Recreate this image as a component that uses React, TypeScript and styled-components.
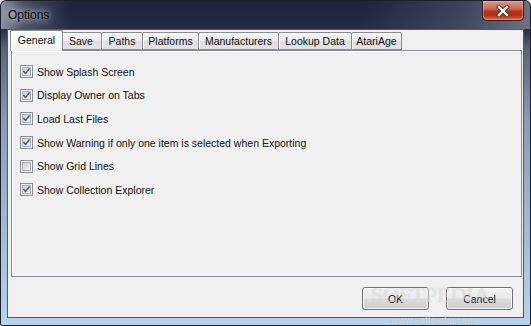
import React from 'react';
import styled, { createGlobalStyle } from 'styled-components';

const GlobalStyle = createGlobalStyle`
  html, body {
    margin: 0;
    padding: 0;
    background: #ffffff;
  }
  * {
    box-sizing: border-box;
  }
`;

const OPTIONS = [
  { label: 'Show Splash Screen', checked: true },
  { label: 'Display Owner on Tabs', checked: true },
  { label: 'Load Last Files', checked: true },
  { label: 'Show Warning if only one item is selected when Exporting', checked: true },
  { label: 'Show Grid Lines', checked: false },
  { label: 'Show Collection Explorer', checked: true },
];

const TABS = [
  { label: 'General', width: 53 },
  { label: 'Save', width: 42 },
  { label: 'Paths', width: 42 },
  { label: 'Platforms', width: 57 },
  { label: 'Manufacturers', width: 81 },
  { label: 'Lookup Data', width: 74 },
  { label: 'AtariAge', width: 51 },
];

const Window = styled.div`
  position: relative;
  width: 531px;
  height: 326px;
  display: flex;
  flex-direction: column;
  padding-bottom: 7px;
  border: 1px solid #1b1f2c;
  border-radius: 6px 6px 2px 2px;
  overflow: hidden;
  background: linear-gradient(
    to bottom,
    #1d2239 0px,
    #252b44 28px,
    #5b6379 48px,
    #8a9bb6 120px,
    #a6c0df 250px,
    #b9d4ef 326px
  );
  font-family: 'Liberation Sans', Arial, sans-serif;
`;

const TitleBar = styled.div`
  height: 28px;
  flex: none;
  display: flex;
  align-items: flex-start;
  justify-content: space-between;
  padding: 0 6px 0 7px;
  background: linear-gradient(
    90deg,
    rgba(150, 158, 178, 0.9) 0px,
    rgba(110, 118, 140, 0.55) 22px,
    rgba(30, 35, 58, 0) 70px,
    rgba(30, 35, 58, 0) 360px,
    rgba(90, 98, 118, 0.5) 460px,
    rgba(130, 138, 155, 0.75) 100%
  );
`;

const Title = styled.span`
  margin-top: 7px;
  font-size: 12px;
  line-height: 15px;
  color: #000;
  text-shadow: 0 0 6px rgba(255, 255, 255, 0.9), 0 0 12px rgba(255, 255, 255, 0.6);
`;

const CloseButton = styled.div`
  width: 42px;
  height: 20px;
  display: flex;
  align-items: center;
  justify-content: center;
  border: 1px solid #3b1a1a;
  border-top: none;
  border-radius: 0 0 5px 5px;
  background: linear-gradient(
    to bottom,
    #dc9582 0%,
    #cf6a52 40%,
    #b92f17 55%,
    #b03016 75%,
    #d36e48 100%
  );
  box-shadow: inset 0 0 0 1px rgba(255, 210, 190, 0.4);
`;

const Client = styled.div`
  flex: 1;
  margin: 0 6px;
  display: flex;
  flex-direction: column;
  background: #f0f0f0;
  border: 1px solid #4f5868;
  padding: 0 1px;
`;

const TabStrip = styled.div`
  height: 20px;
  flex: none;
  display: flex;
  align-items: flex-end;
`;

const Tab = styled.div<{ $active?: boolean; $w: number }>`
  position: relative;
  width: ${p => p.$w}px;
  height: ${p => (p.$active ? 21 : 18)}px;
  margin-bottom: ${p => (p.$active ? -1 : 0)}px;
  margin-right: ${p => (p.$active ? -2 : 0)}px;
  margin-left: ${p => (p.$active ? 0 : -1)}px;
  z-index: ${p => (p.$active ? 2 : 1)};
  display: flex;
  align-items: ${p => (p.$active ? 'flex-start' : 'center')};
  justify-content: center;
  padding-top: ${p => (p.$active ? 3 : 0)}px;
  border: 1px solid #898c95;
  border-bottom: ${p => (p.$active ? 'none' : '1px solid #898c95')};
  border-radius: 2px 2px 0 0;
  background: ${p =>
    p.$active
      ? 'linear-gradient(to bottom, #fdfdfd 0%, #f6f6f6 60%, #f0f0f0 100%)'
      : 'linear-gradient(to bottom, #f5f5f5 0%, #ececec 45%, #dedede 55%, #e3e3e3 100%)'};
  box-shadow: inset 1px 1px 0 rgba(255, 255, 255, 0.9);
  font-size: 10.5px;
  line-height: 13px;
  color: #111;
  white-space: nowrap;

  &:first-child {
    margin-left: 1px;
  }
`;

const Panel = styled.div`
  flex: 1;
  margin: 0 0 0 2px;
  display: flex;
  flex-direction: column;
  padding: 9px 0 0 8px;
  border: 1px solid #898c95;
  background: #f0f0f0;
  box-shadow: inset 1px 1px 0 #ffffff;
`;

const Row = styled.label`
  height: 23.6px;
  display: flex;
  align-items: center;
  gap: 4px;
  font-size: 10.5px;
  color: #111;
`;

const Box = styled.span`
  width: 13px;
  height: 13px;
  flex: none;
  display: flex;
  align-items: center;
  justify-content: center;
  border: 1px solid #8e8f8f;
  background: #f4f4f4;
  padding: 1px;
`;

const BoxInner = styled.span`
  width: 9px;
  height: 9px;
  display: flex;
  align-items: center;
  justify-content: center;
  border: 1px solid #aeb3b9;
  background: linear-gradient(135deg, #cbcfd5 0%, #dfe1e4 50%, #f6f6f6 100%);
`;

const Footer = styled.div`
  flex: none;
  display: flex;
  justify-content: flex-end;
  gap: 17px;
  padding: 10px 9px 7px 0;
`;

const Button = styled.div`
  width: 67px;
  height: 23px;
  display: flex;
  align-items: center;
  justify-content: center;
  border: 1px solid #707070;
  border-radius: 3px;
  background: linear-gradient(
    to bottom,
    #f2f2f2 0%,
    #ebebeb 48%,
    #dddddd 52%,
    #cfcfcf 100%
  );
  box-shadow: inset 0 0 0 1px rgba(255, 255, 255, 0.8);
  font-size: 10.5px;
  color: #111;
`;

const Watermark = styled.div`
  position: absolute;
  left: 370px;
  top: 281px;
  font-family: 'Liberation Serif', 'Times New Roman', serif;
  font-size: 22px;
  color: rgba(255, 255, 255, 0.5);
  text-shadow: 0 0 1px rgba(90, 90, 90, 0.3);
  pointer-events: none;
`;

const WatermarkUrl = styled.div`
  position: absolute;
  left: 390px;
  top: 314px;
  font-family: 'Liberation Sans', Arial, sans-serif;
  font-size: 9px;
  line-height: 10px;
  font-weight: bold;
  color: rgba(255, 255, 255, 0.5);
  text-shadow: 0 0 1px rgba(80, 80, 80, 0.3);
  pointer-events: none;
`;

const CheckMark = () => (
  <svg width="9" height="9" viewBox="0 0 9 9">
    <path
      d="M1.2 4.6 L3.4 7 L7.8 1.3"
      fill="none"
      stroke="#3d5497"
      strokeWidth="1.9"
      strokeLinecap="square"
    />
  </svg>
);

const CloseGlyph = () => (
  <svg width="14" height="12" viewBox="0 0 14 12">
    <path d="M3 2 L11 10 M11 2 L3 10" stroke="#4a2a2a" strokeWidth="4.2" strokeLinecap="square" />
    <path d="M3 2 L11 10 M11 2 L3 10" stroke="#ffffff" strokeWidth="2.4" strokeLinecap="square" />
  </svg>
);

const Checkbox = ({ checked, label }: { checked: boolean; label: string }) => (
  <Row>
    <Box>
      <BoxInner>{checked && <CheckMark />}</BoxInner>
    </Box>
    {label}
  </Row>
);

export default function App() {
  return (
    <>
      <GlobalStyle />
      <Window>
        <TitleBar>
          <Title>Options</Title>
          <CloseButton>
            <CloseGlyph />
          </CloseButton>
        </TitleBar>
        <Client>
          <TabStrip>
            {TABS.map((t, i) => (
              <Tab key={t.label} $w={t.width} $active={i === 0}>
                {t.label}
              </Tab>
            ))}
          </TabStrip>
          <Panel>
            {OPTIONS.map(o => (
              <Checkbox key={o.label} checked={o.checked} label={o.label} />
            ))}
          </Panel>
          <Footer>
            <Button>OK</Button>
            <Button>Cancel</Button>
          </Footer>
        </Client>
        <Watermark>SOFTPEDIA</Watermark>
        <WatermarkUrl>www.softpedia.com</WatermarkUrl>
      </Window>
    </>
  );
}
